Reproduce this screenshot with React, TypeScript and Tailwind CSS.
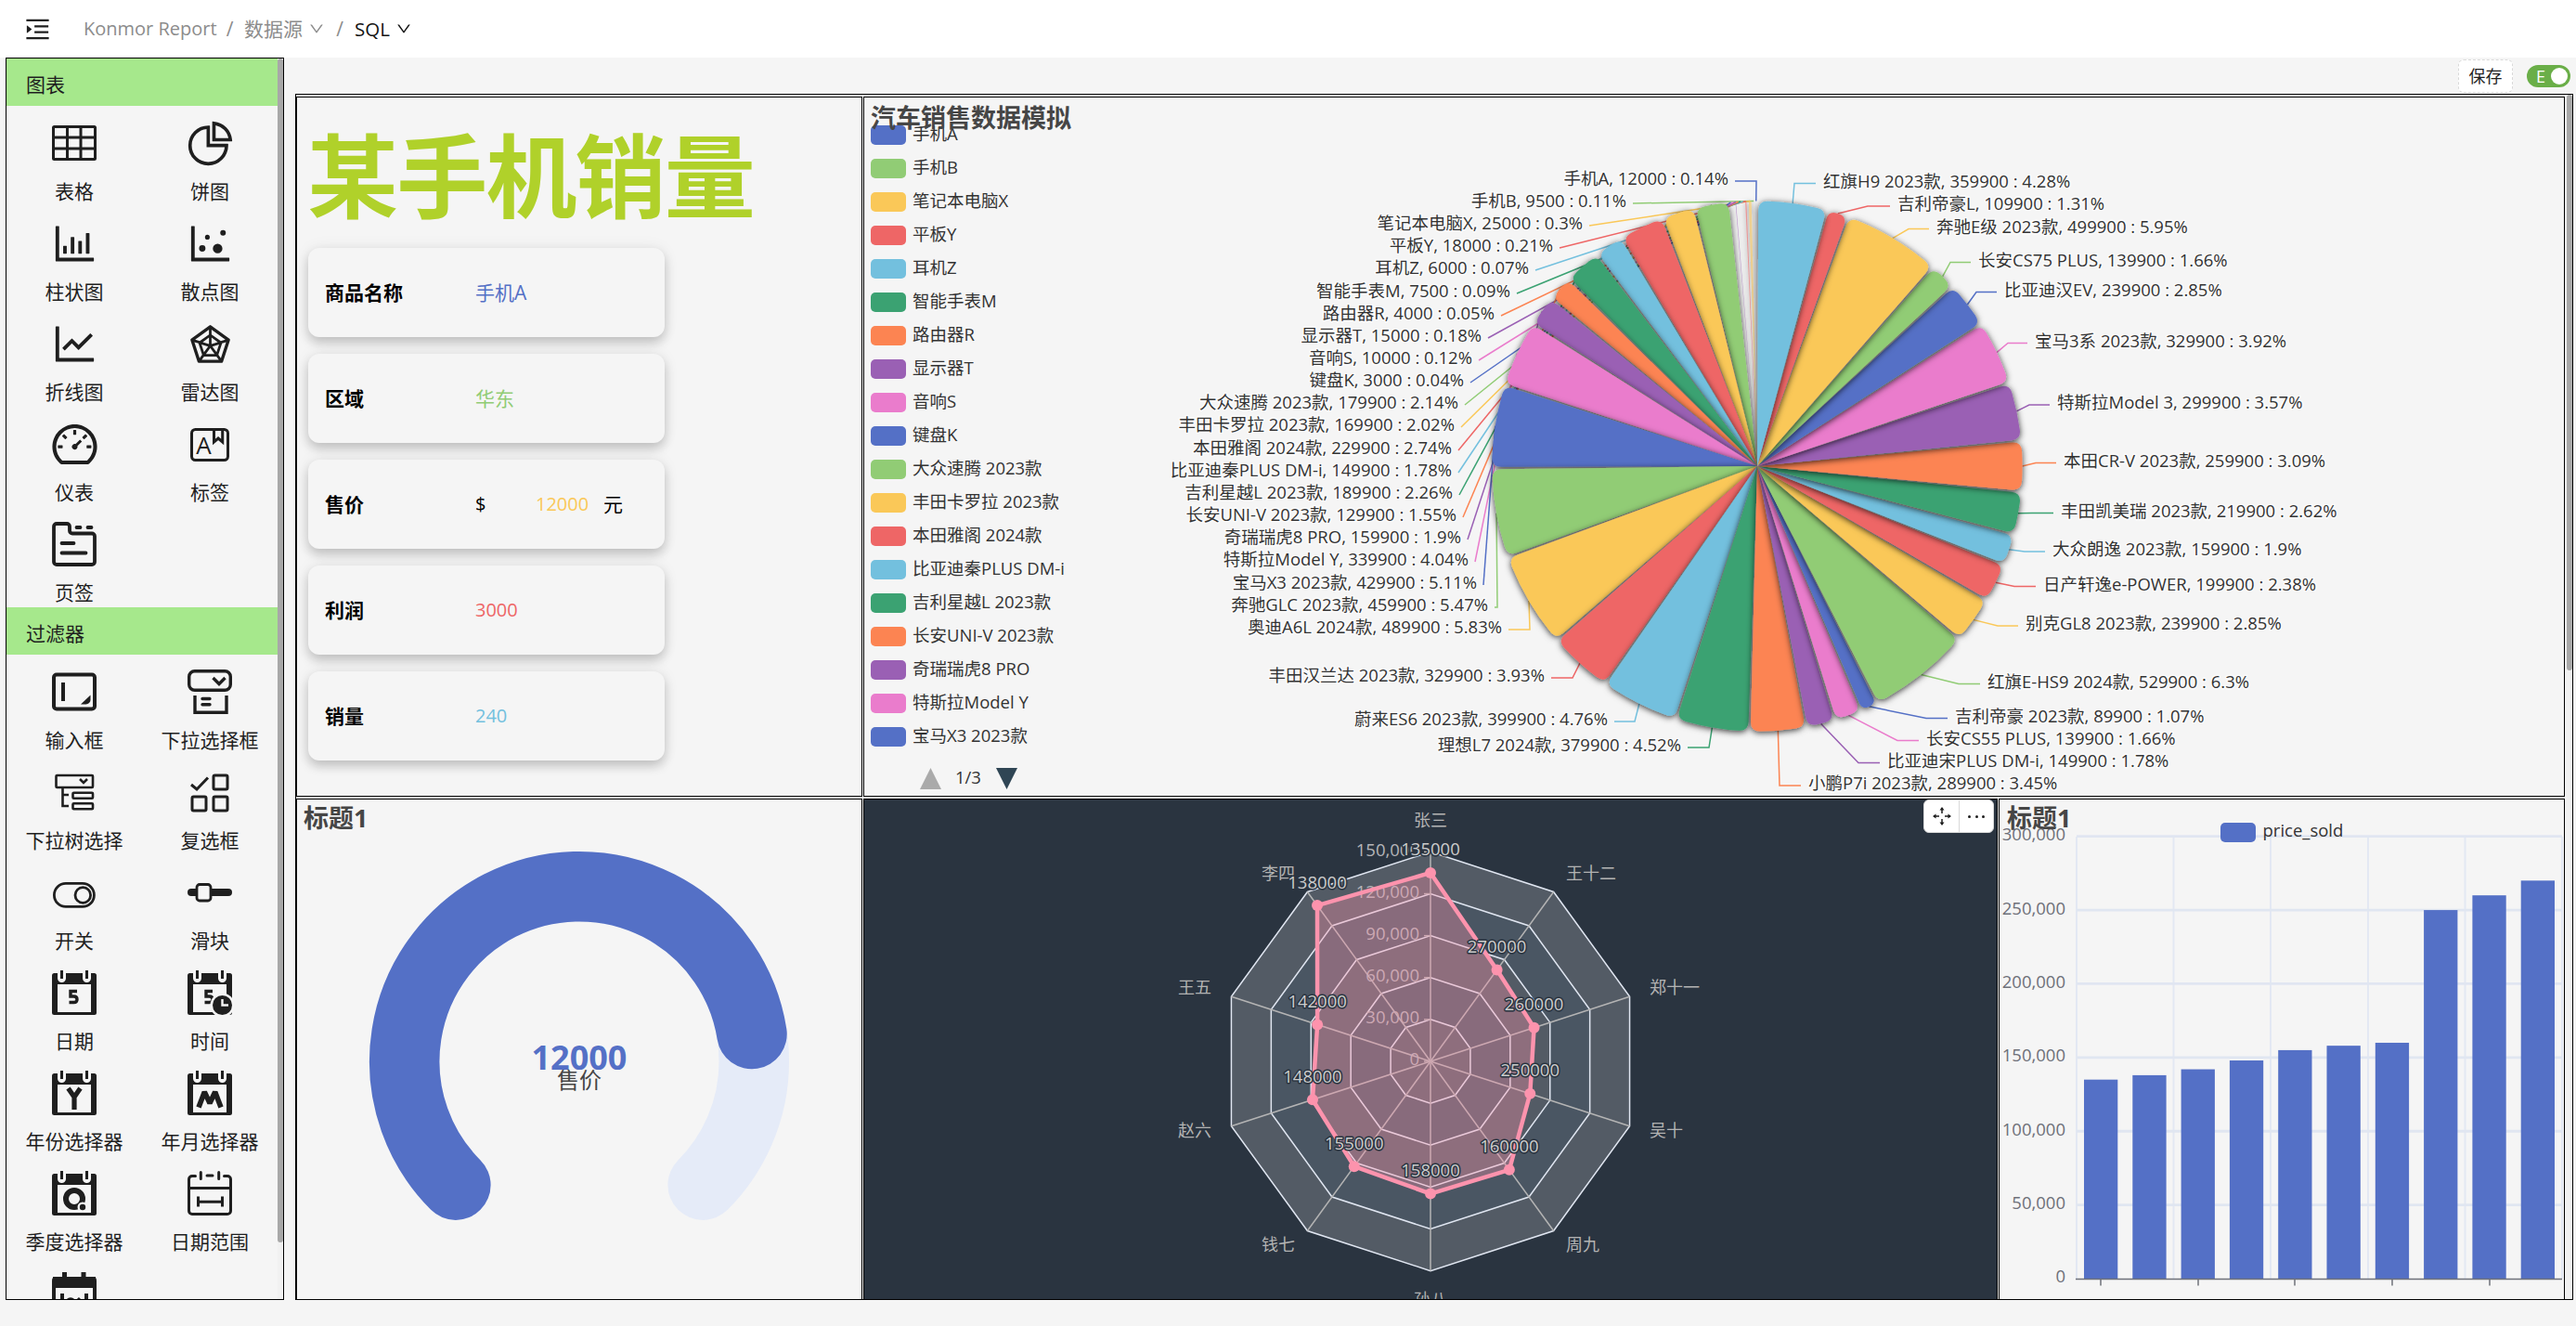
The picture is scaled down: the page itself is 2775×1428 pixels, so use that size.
import React from "react";
import {
  AiOutlineBarChart,
  AiOutlineDashboard,
  AiOutlineDotChart,
  AiOutlineDown,
  AiOutlineLineChart,
  AiOutlineMenuUnfold,
  AiOutlinePieChart,
  AiOutlineRadarChart,
} from "react-icons/ai";

const INK = "#1f1f1f";
const BG = "#f5f5f5";
const PALETTE = ["#5470c6", "#91cc75", "#fac858", "#ee6666", "#73c0de", "#3ba272", "#fc8452", "#9a60b4", "#ea7ccc"];

/* ---------- sidebar icons ---------- */

function Glyph({ children, w = 3 }: { children: React.ReactNode; w?: number }) {
  return (
    <svg width="48" height="48" viewBox="0 0 48 48" fill="none" stroke={INK} strokeWidth={w}>
      {children}
    </svg>
  );
}

function Calendar({ children }: { children?: React.ReactNode }) {
  return (
    <Glyph>
      <g stroke="none">
        <rect y="3" width="48" height="45" rx="2.5" fill={INK} />
        <rect x="6" y="15" width="36" height="30" fill={BG} />
        <path d="M6 0h9v8.500a4.500 4.500 0 0 1-9 0zM33 0h9v8.500a4.500 4.500 0 0 1-9 0z" fill={BG} />
        <rect x="9" width="3" height="9" fill={INK} />
        <rect x="36" width="3" height="9" fill={INK} />
      </g>
      {children}
    </Glyph>
  );
}

const Five = () => (
  <path d="M27 22.500H20V28h3.500c2.500 0 3.500 1.200 3.500 3.200s-1 3.300-3.500 3.300h-5" strokeWidth="3.400" />
);

const Letter = ({ x, y, size, t }: { x: number; y: number; size: number; t: string }) => (
  <text x={x} y={y} fontSize={size} textAnchor="middle" fill={INK} stroke="none">
    {t}
  </text>
);

const TableIcon = () => (
  <Glyph>
    <rect x="1.500" y="6.500" width="45" height="35" rx="1" />
    <path d="M16.500 6v36M31 6v36M1 18h46M1 30h46" />
  </Glyph>
);
const TagIcon = () => (
  <Glyph>
    <rect x="4.500" y="8.500" width="39" height="33" rx="4" />
    <Letter x={17.5} y={34.500} size={26} t="A" />
    <path d="M28.500 9v13l4.600-4 4.600 4V9" strokeWidth="3" />
  </Glyph>
);
const TabIcon = () => (
  <Glyph w={3.800}>
    <path d="M2 43V5a3 3 0 0 1 3-3h11a3 3 0 0 1 3 3v4.500a3 3 0 0 0 3 3h21a3 3 0 0 1 3 3V43a3 3 0 0 1-3 3H5a3 3 0 0 1-3-3z" />
    <path d="M26.500 6h4M38.500 6h4M10.500 23h13M10.500 33.500h26" strokeLinecap="round" />
  </Glyph>
);
const InputIcon = () => (
  <Glyph w={4}>
    <rect x="2" y="5.500" width="44" height="37" rx="3" />
    <path d="M12 14v20" />
    <path d="M41.500 27.500v5a5 5 0 0 1-5 5h-5.500z" fill={INK} stroke="none" />
  </Glyph>
);
const SelectIcon = () => (
  <Glyph w={3.400}>
    <rect x="1.700" y="1.700" width="44.600" height="20.600" rx="6" />
    <path d="M27.500 9l6.500 6.500L40.500 9" />
    <path d="M8 28v18.300h34V28" />
    <path d="M16 31.500h8M16 37.700h8" strokeLinecap="round" />
  </Glyph>
);
const TreeSelectIcon = () => (
  <Glyph w={2.600}>
    <rect x="4.500" y="6" width="39.500" height="13" rx="1" />
    <path d="M30 10l4 4 4-4M11.500 19v20H18M11.500 27H18" />
    <rect x="22.500" y="24.800" width="21.500" height="6" rx="1" />
    <rect x="22.500" y="36.300" width="21.500" height="6" rx="1" />
  </Glyph>
);
const CheckIcon = () => (
  <Glyph w={3}>
    <path d="M4 16l6 5L22 8.500" />
    <rect x="28" y="6" width="15" height="15" rx="1.500" />
    <rect x="5" y="29" width="15" height="15" rx="1.500" />
    <rect x="28" y="29" width="15" height="15" rx="1.500" />
  </Glyph>
);
const SwitchIcon = () => (
  <Glyph w={2.800}>
    <rect x="2.400" y="14.400" width="43" height="25" rx="12.500" />
    <circle cx="33.300" cy="27" r="8.300" />
  </Glyph>
);
const SliderIcon = () => (
  <Glyph w={2.800}>
    <rect y="20" width="48" height="8" rx="4" fill={INK} stroke="none" />
    <rect x="10" y="15.500" width="15" height="17.500" rx="3" fill={BG} />
  </Glyph>
);
const DateIcon = () => (
  <Calendar>
    <Five />
  </Calendar>
);
const TimeIcon = () => (
  <Calendar>
    <Five />
    <circle cx="37.500" cy="37.500" r="13" fill={BG} stroke="none" />
    <circle cx="37.500" cy="37.500" r="10.500" fill={INK} stroke="none" />
    <path d="M37.500 31v6.500H44" stroke={BG} strokeWidth="2.400" />
  </Calendar>
);
const YearIcon = () => (
  <Calendar>
    <path d="M17.500 19l6.500 9.500L30.500 19M24 27v15" strokeWidth="5.200" />
  </Calendar>
);
const MonthIcon = () => (
  <Calendar>
    <path d="M12 39.500L18.300 23 24 35l5.700-12L36 39.500" strokeWidth="5.600" strokeLinejoin="bevel" />
  </Calendar>
);
const QuarterIcon = () => (
  <Calendar>
    <circle cx="24" cy="30" r="9" strokeWidth="6" />
    <circle cx="33" cy="39" r="5.500" fill={BG} stroke="none" />
    <circle cx="33" cy="39" r="3.200" fill={INK} stroke="none" />
  </Calendar>
);
const RangeIcon = () => (
  <Glyph w={3}>
    <path d="M8.500 5.500H5a3.500 3.500 0 0 0-3.500 3.500v34A3.500 3.500 0 0 0 5 46.500h38a3.500 3.500 0 0 0 3.500-3.500V9A3.500 3.500 0 0 0 43 5.500h-3.500M21 5h6M14.300 1.500v7M33.700 1.500v7" strokeLinecap="round" />
    <path d="M1 18.500h46M11.500 27.500v11M37.500 27.500v11M11 33.200h27" />
  </Glyph>
);
const WeekIcon = () => (
  <Glyph>
    <path d="M11 1h5v6h-5zM31.500 1h5v6h-5z" fill={INK} stroke="none" />
    <rect x="2" y="8" width="44" height="44" rx="2" strokeWidth="4" />
    <path d="M1 6h46v12H1z" fill={INK} stroke="none" />
    <path d="M11 24v14M37 24v14" strokeWidth="4" />
    <path d="M17 31a4 4 0 0 1 6 0M26 33l4-4" strokeWidth="3" />
  </Glyph>
);

type Tool = { label: string; icon: React.ReactNode };

const CHART_TOOLS: Tool[] = [
  { label: "表格", icon: <TableIcon /> },
  { label: "饼图", icon: <AiOutlinePieChart size={55} /> },
  { label: "柱状图", icon: <AiOutlineBarChart size={55} /> },
  { label: "散点图", icon: <AiOutlineDotChart size={55} /> },
  { label: "折线图", icon: <AiOutlineLineChart size={55} /> },
  { label: "雷达图", icon: <AiOutlineRadarChart size={51} /> },
  { label: "仪表", icon: <AiOutlineDashboard size={55} /> },
  { label: "标签", icon: <TagIcon /> },
  { label: "页签", icon: <TabIcon /> },
];

const FILTER_TOOLS: Tool[] = [
  { label: "输入框", icon: <InputIcon /> },
  { label: "下拉选择框", icon: <SelectIcon /> },
  { label: "下拉树选择", icon: <TreeSelectIcon /> },
  { label: "复选框", icon: <CheckIcon /> },
  { label: "开关", icon: <SwitchIcon /> },
  { label: "滑块", icon: <SliderIcon /> },
  { label: "日期", icon: <DateIcon /> },
  { label: "时间", icon: <TimeIcon /> },
  { label: "年份选择器", icon: <YearIcon /> },
  { label: "年月选择器", icon: <MonthIcon /> },
  { label: "季度选择器", icon: <QuarterIcon /> },
  { label: "日期范围", icon: <RangeIcon /> },
  { label: "", icon: <WeekIcon /> },
];

function ToolGroup({ title, items }: { title: string; items: Tool[] }) {
  return (
    <section>
      <h2 className="h-[51px] bg-[#a6e88c] pl-[21px] pt-[13px] text-[21px] leading-[30px]">{title}</h2>
      <div className="grid grid-cols-2">
        {items.map((t, i) => (
          <div key={i} className="flex h-[108px] flex-col items-center pt-4">
            <div className="flex h-12 w-12 shrink-0 items-center justify-center [&>svg]:shrink-0">{t.icon}</div>
            <div className="mt-[13px] whitespace-nowrap text-[21px] leading-[30px]">{t.label}</div>
          </div>
        ))}
      </div>
    </section>
  );
}

/* ---------- svg text helper ---------- */

type LabelProps = {
  x: number;
  y: number;
  size?: number;
  anchor?: "start" | "middle" | "end";
  fill?: string;
  halo?: string;
  bold?: boolean;
  children: React.ReactNode;
};

function Label({ x, y, size = 18, anchor = "start", fill = "#333", halo, bold, children }: LabelProps) {
  return (
    <text
      x={x}
      y={y + size * 0.35}
      fontSize={size}
      textAnchor={anchor}
      fill={fill}
      fontWeight={bold ? 700 : 400}
      stroke={halo ?? "none"}
      strokeWidth={halo ? 3 : 0}
      strokeLinejoin="round"
      paintOrder="stroke"
    >
      {children}
    </text>
  );
}

/* ---------- pie ---------- */

type Slice = { n: string; v: number; p: string; y: number; end: number; mid?: number };

// Ordered counter-clockwise from twelve o'clock.
const SLICES: Slice[] = [
  { n: "手机A", v: 12000, p: "0.14%", y: 195, end: 1869, mid: 1892 },
  { n: "手机B", v: 9500, p: "0.11%", y: 219, end: 1759 },
  { n: "笔记本电脑X", v: 25000, p: "0.3%", y: 243, end: 1712 },
  { n: "平板Y", v: 18000, p: "0.21%", y: 267, end: 1680 },
  { n: "耳机Z", v: 6000, p: "0.07%", y: 291, end: 1654 },
  { n: "智能手表M", v: 7500, p: "0.09%", y: 316, end: 1634 },
  { n: "路由器R", v: 4000, p: "0.05%", y: 340, end: 1617 },
  { n: "显示器T", v: 15000, p: "0.18%", y: 364, end: 1603 },
  { n: "音响S", v: 10000, p: "0.12%", y: 388, end: 1593 },
  { n: "键盘K", v: 3000, p: "0.04%", y: 412, end: 1584 },
  { n: "大众速腾 2023款", v: 179900, p: "2.14%", y: 436, end: 1578 },
  { n: "丰田卡罗拉 2023款", v: 169900, p: "2.02%", y: 460, end: 1574 },
  { n: "本田雅阁 2024款", v: 229900, p: "2.74%", y: 485, end: 1571 },
  { n: "比亚迪秦PLUS DM-i", v: 149900, p: "1.78%", y: 509, end: 1571 },
  { n: "吉利星越L 2023款", v: 189900, p: "2.26%", y: 533, end: 1572 },
  { n: "长安UNI-V 2023款", v: 129900, p: "1.55%", y: 557, end: 1576 },
  { n: "奇瑞瑞虎8 PRO", v: 159900, p: "1.9%", y: 581, end: 1581 },
  { n: "特斯拉Model Y", v: 339900, p: "4.04%", y: 605, end: 1589 },
  { n: "宝马X3 2023款", v: 429900, p: "5.11%", y: 630, end: 1598 },
  { n: "奔驰GLC 2023款", v: 459900, p: "5.47%", y: 654, end: 1610, mid: 1613 },
  { n: "奥迪A6L 2024款", v: 489900, p: "5.83%", y: 678, end: 1625, mid: 1648 },
  { n: "丰田汉兰达 2023款", v: 329900, p: "3.93%", y: 730, end: 1671, mid: 1694 },
  { n: "蔚来ES6 2023款", v: 399900, p: "4.76%", y: 777, end: 1739, mid: 1761 },
  { n: "理想L7 2024款", v: 379900, p: "4.52%", y: 805, end: 1818, mid: 1841 },
  { n: "小鹏P7i 2023款", v: 289900, p: "3.45%", y: 846, end: 1940, mid: 1917 },
  { n: "比亚迪宋PLUS DM-i", v: 149900, p: "1.78%", y: 821.5, end: 2025, mid: 2002 },
  { n: "长安CS55 PLUS", v: 139900, p: "1.66%", y: 797.5, end: 2067, mid: 2044 },
  { n: "吉利帝豪 2023款", v: 89900, p: "1.07%", y: 773.5, end: 2098, mid: 2075 },
  { n: "红旗E-HS9 2024款", v: 529900, p: "6.3%", y: 736.5, end: 2133, mid: 2110 },
  { n: "别克GL8 2023款", v: 239900, p: "2.85%", y: 674, end: 2174, mid: 2152 },
  { n: "日产轩逸e-POWER", v: 199900, p: "2.38%", y: 631.5, end: 2193, mid: 2170 },
  { n: "大众朗逸 2023款", v: 159900, p: "1.9%", y: 594, end: 2203, mid: 2181 },
  { n: "丰田凯美瑞 2023款", v: 219900, p: "2.62%", y: 552.5, end: 2212, mid: 2189 },
  { n: "本田CR-V 2023款", v: 259900, p: "3.09%", y: 498.5, end: 2215, mid: 2193 },
  { n: "特斯拉Model 3", v: 299900, p: "3.57%", y: 436, end: 2208, mid: 2186 },
  { n: "宝马3系 2023款", v: 329900, p: "3.92%", y: 369.5, end: 2184, mid: 2163 },
  { n: "比亚迪汉EV", v: 239900, p: "2.85%", y: 314.5, end: 2151, mid: 2129 },
  { n: "长安CS75 PLUS", v: 139900, p: "1.66%", y: 282.5, end: 2123, mid: 2101 },
  { n: "奔驰E级 2023款", v: 499900, p: "5.95%", y: 246.5, end: 2078, mid: 2056 },
  { n: "吉利帝豪L", v: 109900, p: "1.31%", y: 222, end: 2036, mid: 2012 },
  { n: "红旗H9 2023款", v: 359900, p: "4.28%", y: 197.5, end: 1956, mid: 1933 },
];

const PIE = { cx: 1893, cy: 502, r: 285.5 };
const PAD = 0.5;

function pieAngles() {
  const total = SLICES.reduce((s, d) => s + d.v, 0);
  let rest = 360;
  let large = 0;
  const small = SLICES.map((d) => {
    const isSmall = (d.v / total) * 360 < PAD;
    if (isSmall) rest -= PAD;
    else large += d.v;
    return isSmall;
  });
  let a = 0;
  return SLICES.map((d, i) => {
    const sweep = small[i] ? PAD : (d.v / large) * rest;
    const out = { a0: a, a1: a + sweep, thin: small[i] };
    a += sweep;
    return out;
  });
}

// deg is measured counter-clockwise from twelve o'clock.
function polar(deg: number, r: number): [number, number] {
  const t = (deg * Math.PI) / 180;
  return [PIE.cx - r * Math.sin(t), PIE.cy - r * Math.cos(t)];
}

const f = (p: [number, number]) => `${p[0].toFixed(2)} ${p[1].toFixed(2)}`;

function slicePath(a0: number, a1: number) {
  const s = a0 + PAD / 2;
  const e = a1 - PAD / 2;
  const arc = ((e - s) * Math.PI * PIE.r) / 180;
  const c = Math.min(10, arc / 2.2);
  const d = (c / PIE.r) * (180 / Math.PI);
  return `M${PIE.cx} ${PIE.cy}L${f(polar(s, PIE.r - c))}Q${f(polar(s, PIE.r))} ${f(polar(s + d, PIE.r))}A${PIE.r} ${PIE.r} 0 0 0 ${f(polar(e - d, PIE.r))}Q${f(polar(e, PIE.r))} ${f(polar(e, PIE.r - c))}Z`;
}

function PieChart() {
  const angles = pieAngles();
  return (
    <svg className="absolute left-0 top-0" width="1831" height="752" viewBox="931 105 1831 752">
      <defs>
        <filter id="sliceShadow" x="900" y="180" width="1900" height="660" filterUnits="userSpaceOnUse">
          <feDropShadow dx="0" dy="1.500" stdDeviation="3.800" floodColor="#000" floodOpacity="0.8" />
        </filter>
      </defs>
      <g fill="none" strokeWidth="1.500">
        {SLICES.map((s, i) => {
          const m = (angles[i].a0 + angles[i].a1) / 2;
          const start = polar(m, PIE.r);
          return <path key={s.n} d={`M${f(start)}L${s.mid ?? s.end} ${s.y}H${s.end}`} stroke={PALETTE[i % 9]} />;
        })}
      </g>
      {SLICES.map((s, i) =>
        angles[i].thin ? null : (
          <path
            key={s.n}
            d={slicePath(angles[i].a0, angles[i].a1)}
            fill={PALETTE[i % 9]}
            opacity={s.v < 30000 ? 0.6 : 1}
            filter="url(#sliceShadow)"
          />
        ),
      )}
      {SLICES.map((s) => {
        const left = s.end < 1900;
        return (
          <Label
            key={s.n}
            x={s.end + (left ? -7 : 8)}
            y={s.y - 2}
            size={18.5}
            anchor={left ? "end" : "start"}
            halo="#fbfbfb"
          >
            {`${s.n}, ${s.v} : ${s.p}`}
          </Label>
        );
      })}
    </svg>
  );
}

const LEGEND = SLICES.slice(0, 19).map((s) => s.n);

function PiePanel() {
  return (
    <Panel className="w-[1833px]">
      <PieChart />
      <div className="relative flex flex-col pl-[7px] pt-[30px] text-[18.5px] text-[#333]">
        {LEGEND.map((n, i) => (
          <div key={n} className="mb-[15px] flex h-[21px] items-center gap-[7px]">
            <span className="h-[21px] w-[38px] rounded-[5px]" style={{ background: PALETTE[i % 9] }} />
            <span className="-mt-[5px] leading-[21px]">{n}</span>
          </div>
        ))}
        <div className="flex items-center gap-[15px] pl-[53px] pt-[8px]">
          <svg width="23" height="23" viewBox="0 0 23 23">
            <path d="M0 23L11.500 0 23 23z" fill="#aaa" />
          </svg>
          <span className="-mt-[4px] w-[29px] leading-[23px]">1/3</span>
          <svg width="23" height="23" viewBox="0 0 23 23">
            <path d="M0 0L11.500 23 23 0z" fill="#2f4554" />
          </svg>
        </div>
      </div>
      <h3 className="absolute left-[7px] top-[2px] text-[27px] font-bold leading-[40px] text-[#464646]">汽车销售数据模拟</h3>
    </Panel>
  );
}

/* ---------- gauge ---------- */

function arcPath(cx: number, cy: number, r: number, from: number, to: number) {
  const pt = (d: number) => {
    const t = (d * Math.PI) / 180;
    return `${(cx + r * Math.cos(t)).toFixed(2)} ${(cy - r * Math.sin(t)).toFixed(2)}`;
  };
  return `M${pt(from)}A${r} ${r} 0 ${from - to > 180 ? 1 : 0} 1 ${pt(to)}`;
}

function GaugePanel() {
  return (
    <Panel className="w-[610px]">
      <svg className="absolute left-0 top-0" width="608" height="540" viewBox="320 861 608 540">
        <g fill="none" strokeWidth="75.500" strokeLinecap="round">
          <path d={arcPath(624, 1143, 188.3, 225, -45)} stroke="#e5ebf8" />
          <path d={arcPath(624, 1143, 188.3, 225, 9)} stroke="#5470c6" />
        </g>
        <Label x={624} y={1164} size={24} anchor="middle" fill="#464646">
          售价
        </Label>
        <Label x={624} y={1139.5} size={36} anchor="middle" fill="#5470c6" bold>
          12000
        </Label>
      </svg>
      <h3 className="absolute left-[7px] top-0 text-[27px] font-bold leading-[40px] text-[#464646]">标题1</h3>
    </Panel>
  );
}

/* ---------- radar ---------- */

const RADAR = { cx: 1541, cy: 1143, r: 225.6 };
const RADAR_DATA = [
  { n: "张三", v: 135000, k: 0.9, x: 1541, y: 884 },
  { n: "李四", v: 138000, k: 0.92, x: 1377, y: 941 },
  { n: "王五", v: 142000, k: 0.568, x: 1287, y: 1064 },
  { n: "赵六", v: 148000, k: 0.592, x: 1287, y: 1218 },
  { n: "钱七", v: 155000, k: 0.62, x: 1377, y: 1341 },
  { n: "孙八", v: 158000, k: 0.632, x: 1541, y: 1400 },
  { n: "周九", v: 160000, k: 0.64, x: 1705, y: 1341 },
  { n: "吴十", v: 250000, k: 0.5, x: 1795, y: 1218 },
  { n: "郑十一", v: 260000, k: 0.52, x: 1804, y: 1064 },
  { n: "王十二", v: 270000, k: 0.54, x: 1714, y: 941 },
];

function radarPt(i: number, k: number): [number, number] {
  const t = (i * 36 * Math.PI) / 180;
  return [RADAR.cx - RADAR.r * k * Math.sin(t), RADAR.cy - RADAR.r * k * Math.cos(t)];
}

const ring = (k: number) => RADAR_DATA.map((_, i) => radarPt(i, k).join(",")).join(" ");

function RadarPanel() {
  return (
    <Panel className="w-[1222px] bg-[#2a3440]">
      <svg className="absolute left-0 top-0" width="1220" height="538" viewBox="931 861 1220 538">
        {[1, 0.8, 0.6, 0.4, 0.2].map((k, i) => (
          <polygon key={k} points={ring(k)} fill={i % 2 ? "#4a5663" : "#535b65"} stroke="#e0e6f1" strokeWidth="1.500" />
        ))}
        {RADAR_DATA.map((d, i) => {
          const [x, y] = radarPt(i, 1);
          return <line key={d.n} x1={RADAR.cx} y1={RADAR.cy} x2={x} y2={y} stroke="#b4b4b4" strokeWidth="1.500" />;
        })}
        {[0, 30, 60, 90, 120, 150].map((v) => {
          const y = RADAR.cy - (v / 150) * RADAR.r;
          return (
            <g key={v}>
              <path d={`M1541 ${y}h-7`} stroke="#b4b4b4" strokeWidth="1.500" />
              <Label x={1529} y={y - 2} anchor="end" fill="#b4b4b8" size={18.5}>
                {v ? `${v},000` : "0"}
              </Label>
            </g>
          );
        })}
        <polygon
          points={RADAR_DATA.map((d, i) => radarPt(i, d.k).join(",")).join(" ")}
          fill="#fd93ad"
          fillOpacity="0.350"
          stroke="#fd93ad"
          strokeWidth="4.500"
          strokeLinejoin="round"
        />
        {RADAR_DATA.map((d, i) => {
          const [x, y] = radarPt(i, d.k);
          return (
            <g key={d.n}>
              <Label x={d.x} y={d.y} anchor="middle" fill="#b3b3b3">
                {d.n}
              </Label>
              <circle cx={x} cy={y} r="6" fill="#fd93ad" />
            </g>
          );
        })}
        {RADAR_DATA.map((d, i) => {
          const [x, y] = radarPt(i, d.k);
          return (
            <Label key={d.v} x={x} y={y - 25} anchor="middle" fill="#ccc" halo="#2a3440" size={18.5}>
              {d.v}
            </Label>
          );
        })}
      </svg>
      <div className="absolute right-[3px] top-0 flex h-[36px] w-[76px] rounded-[6px] border border-[#d9d9d9] bg-white">
        <div className="flex flex-1 items-center justify-center border-r border-[#d9d9d9]">
          <svg width="20" height="20" viewBox="0 0 20 20" fill="none" stroke={INK} strokeWidth="1.500">
            <path d="M10 1v6M10 13v6M1 10h6M13 10h6" />
            <path d="M10 0l2.500 3.500h-5zM10 20l2.500-3.500h-5zM0 10l3.500-2.500v5zM20 10l-3.500-2.500v5z" fill={INK} stroke="none" />
          </svg>
        </div>
        <div className="flex w-[36px] items-center justify-center gap-[4.500px]">
          <i className="h-[3px] w-[3px] rounded-full bg-[#1f1f1f]" />
          <i className="h-[3px] w-[3px] rounded-full bg-[#1f1f1f]" />
          <i className="h-[3px] w-[3px] rounded-full bg-[#1f1f1f]" />
        </div>
      </div>
    </Panel>
  );
}

/* ---------- bars ---------- */

const BARS = [135, 138, 142, 148, 155, 158, 160, 250, 260, 270];

function BarPanel() {
  const y0 = 1377;
  const unit = 476.3 / 300;
  return (
    <Panel className="w-[610px]">
      <svg className="absolute left-0 top-0" width="608" height="538" viewBox="2154 861 608 538">
        {[2237, 2341.5, 2446, 2551, 2655.5, 2760].map((x) => (
          <path key={x} d={`M${x} 901V${y0}`} stroke="#e3e8f3" strokeWidth="2" />
        ))}
        {[50, 100, 150, 200, 250, 300].map((v) => (
          <path key={v} d={`M2237 ${y0 - v * unit}H2760`} stroke="#e0e6f1" strokeWidth="2.800" />
        ))}
        {[0, 50, 100, 150, 200, 250, 300].map((v) => (
          <Label key={v} x={2225} y={y0 - v * unit - 2} anchor="end" fill="#6e7079" size={18.5}>
            {v ? `${v},000` : "0"}
          </Label>
        ))}
        {BARS.map((v, i) => (
          <rect key={v} x={2245 + i * 52.3} y={y0 - v * unit} width="36.300" height={v * unit} fill="#5470c6" />
        ))}
        <path d={`M2236 ${y0 + 0.5}H2760`} stroke="#6e7079" strokeWidth="1.500" />
        {[2263, 2368, 2472, 2577, 2682].map((x) => (
          <path key={x} d={`M${x} ${y0}v7.500`} stroke="#6e7079" strokeWidth="1.500" />
        ))}
        <rect x="2392" y="886" width="38" height="21" rx="5" fill="#5470c6" />
        <Label x={2437.5} y={895} size={18.5}>
          price_sold
        </Label>
      </svg>
      <h3 className="absolute left-[8px] top-0 text-[27px] font-bold leading-[40px] text-[#464646]">标题1</h3>
    </Panel>
  );
}

/* ---------- cards ---------- */

function Panel({ className = "", children }: { className?: string; children: React.ReactNode }) {
  return <div className={`relative h-full shrink-0 overflow-hidden border border-black ${className}`}>{children}</div>;
}

function Card({ name, children }: { name: string; children: React.ReactNode }) {
  return (
    <div className="flex h-[96px] w-[384px] items-center rounded-[12px] bg-[#f5f5f5] pl-[18px] text-[21px] leading-[30px] shadow-[0_6px_12px_rgba(0,0,0,0.2),0_0_18px_rgba(0,0,0,0.06)]">
      <span className="w-[162px] font-bold text-black">{name}</span>
      <span className="flex">{children}</span>
    </div>
  );
}

function ProductPanel() {
  return (
    <Panel className="w-[610px]">
      <h1 className="h-[162px] pl-[11px] pt-[24px] text-[98px] font-bold leading-[120px] tracking-[-1.800px] text-[#b0d12a]">
        某手机销量
      </h1>
      <div className="flex flex-col gap-[18px] pl-[12px]">
        <Card name="商品名称">
          <span className="text-[#5470c6]">手机A</span>
        </Card>
        <Card name="区域">
          <span className="text-[#91cc75]">华东</span>
        </Card>
        <Card name="售价">
          <span className="w-[65px] text-[20px] text-black">$</span>
          <span className="w-[73px] text-[20px] text-[#fac858]">12000</span>
          <span className="text-black">元</span>
        </Card>
        <Card name="利润">
          <span className="text-[20px] text-[#ee6666]">3000</span>
        </Card>
        <Card name="销量">
          <span className="text-[20px] text-[#73c0de]">240</span>
        </Card>
      </div>
    </Panel>
  );
}

/* ---------- page ---------- */

export default function App() {
  return (
    <div className="flex h-[1428px] w-[2775px] flex-col overflow-hidden bg-[#f5f5f5] font-['Open_Sans','Noto_Sans_CJK_SC',sans-serif] text-[#1f1f1f]">
      <header className="flex h-[62px] shrink-0 items-center bg-white pl-[25px] text-[21px] leading-[30px] text-[#8c8c8c]">
        <AiOutlineMenuUnfold size={31} color={INK} />
        <span className="ml-[34px] w-[142px] whitespace-nowrap text-[20px]">Konmor Report</span>
        <span className="w-[31px] text-center">/</span>
        <span>数据源</span>
        <AiOutlineDown size={18} className="ml-[6px]" />
        <span className="w-[32px] text-center">/</span>
        <span className="text-[20.5px] text-[#141414]">SQL</span>
        <AiOutlineDown size={18} color="#141414" className="ml-[6px]" />
      </header>

      <div className="flex h-[1338px] pl-[6px]">
        <aside className="flex w-[300px] shrink-0 overflow-hidden border border-black">
          <div className="h-[1336px] w-[292px] shrink-0 overflow-hidden">
            <ToolGroup title="图表" items={CHART_TOOLS} />
            <ToolGroup title="过滤器" items={FILTER_TOOLS} />
          </div>
          <div className="w-[6px] bg-[#f1f1f1]">
            <div className="h-[1275px] rounded-[3px] bg-[#a8a8a8]" />
          </div>
        </aside>

        <main className="ml-[12px] w-[2454px]">
          <div className="flex h-[39px] items-start justify-end gap-[15px] pr-[3px] pt-[2px]">
            <button className="h-[36px] w-[59px] rounded-[6px] border border-dashed border-[#d9d9d9] bg-white text-[18px] leading-[33px]">
              保存
            </button>
            <div className="mt-[6px] flex h-[24px] w-[47px] items-center justify-between rounded-full bg-[#6aae48] pl-[10px] pr-[3px] text-[18px] leading-[24px] text-white">
              <span>E</span>
              <span className="h-[18px] w-[18px] rounded-full bg-white" />
            </div>
          </div>

          <div className="flex h-[1299px] overflow-hidden border border-black">
            <div className="flex shrink-0 flex-col gap-[2px] pt-[2px]">
              <div className="flex h-[754px] shrink-0 gap-px">
                <ProductPanel />
                <PiePanel />
              </div>
              <div className="flex h-[560px] shrink-0 gap-px">
                <GaugePanel />
                <RadarPanel />
                <BarPanel />
              </div>
            </div>
            <div className="ml-[2px] w-[6px] shrink-0 bg-[#f1f1f1]">
              <div className="h-[620px] rounded-[3px] bg-[#a8a8a8]" />
            </div>
          </div>
        </main>
      </div>
    </div>
  );
}
